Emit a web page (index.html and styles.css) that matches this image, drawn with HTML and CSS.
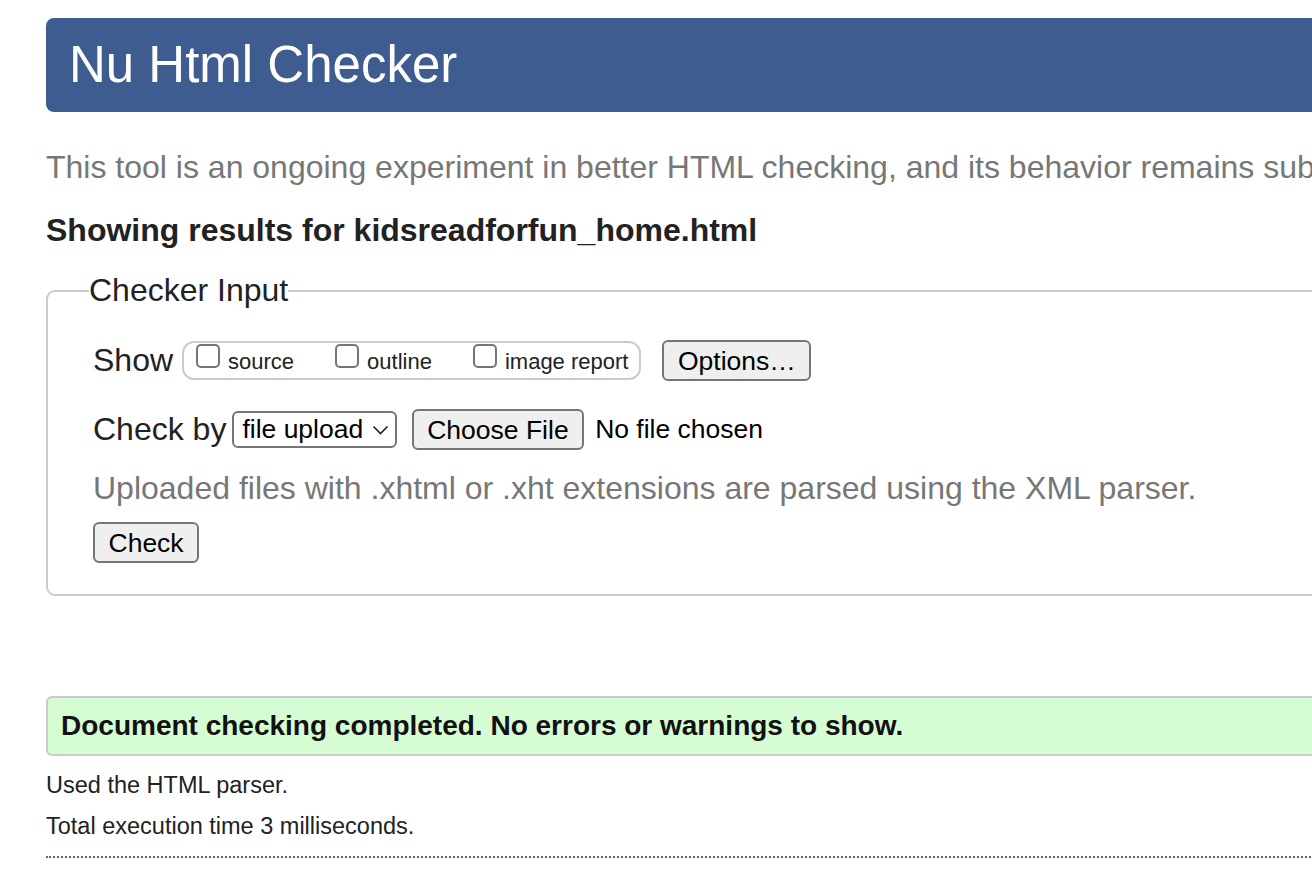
FILE: index.html
```html
<!DOCTYPE html>
<html lang="en">
<head>
<meta charset="utf-8">
<title>Nu Html Checker</title>
<link rel="stylesheet" href="styles.css">
</head>
<body>
<div class="page">
  <header class="banner"><h1>Nu Html Checker</h1></header>
  <p class="intro">This tool is an ongoing experiment in better HTML checking, and its behavior remains subject to change</p>
  <h2 class="result-title">Showing results for kidsreadforfun_home.html</h2>
  <fieldset class="checker">
    <legend>Checker Input</legend>
    <div class="row row-show">
      <span class="row-label">Show</span>
      <span class="group">
        <label class="opt"><input type="checkbox" class="cb"><span class="opt-text">source</span></label>
        <label class="opt"><input type="checkbox" class="cb"><span class="opt-text">outline</span></label>
        <label class="opt"><input type="checkbox" class="cb"><span class="opt-text">image report</span></label>
      </span>
      <button class="btn btn-options" type="button">Options…</button>
    </div>
    <div class="row row-checkby">
      <span class="row-label">Check by</span>
      <span class="select">
        <span class="select-text">file upload</span>
        <svg class="chev" width="17" height="10" viewBox="0 0 17 10"><path d="M1.5 1.5 L8.5 8.5 L15.5 1.5" fill="none" stroke="#222" stroke-width="1.6"/></svg>
      </span>
      <button class="btn btn-file" type="button">Choose File</button>
      <span class="file-status">No file chosen</span>
    </div>
    <p class="note">Uploaded files with .xhtml or .xht extensions are parsed using the XML parser.</p>
    <button class="btn btn-check" type="button">Check</button>
  </fieldset>
  <p class="success">Document checking completed. No errors or warnings to show.</p>
  <p class="meta meta-first">Used the HTML parser.</p>
  <p class="meta">Total execution time 3 milliseconds.</p>
  <div class="dotted"></div>
</div>
</body>
</html>
```
FILE: styles.css
```css
html {
  overflow: hidden;
}
body {
  margin: 0;
  font-family: "Liberation Sans", Arial, Helvetica, sans-serif;
  font-size: 32px;
  color: #222;
  background: #fff;
}
.page {
  width: 1700px;
  padding: 18px 0 0 46px;
}
.banner {
  height: 94px;
  box-sizing: border-box;
  padding: 16px 0 0 23px;
  background: #3e5c90;
  border-radius: 8px;
}
.banner h1 {
  margin: 0;
  font-size: 51px;
  font-weight: normal;
  line-height: 62px;
  color: #fff;
}
.intro {
  margin: 37px 0 0;
  line-height: 37px;
  color: #777;
  white-space: nowrap;
}
.result-title {
  margin: 26px 0 0;
  font-size: 32px;
  line-height: 37px;
  font-weight: bold;
  color: #222;
}
.checker {
  margin: 23px 0 0;
  padding: 0 0 31px 41px;
  border: 2px solid #cbcbcb;
  border-radius: 9px;
  min-width: 0;
}
.checker legend {
  padding: 0;
  font-size: 32px;
  line-height: 37px;
}
.row {
  display: flex;
  align-items: center;
  height: 41px;
  margin-left: 4px;
}
.row-show {
  margin-top: 31px;
}
.row-checkby {
  margin-top: 28px;
}
.row-label {
  font-size: 32px;
  line-height: 37px;
}
.group {
  display: flex;
  align-items: flex-start;
  gap: 41px;
  height: 39px;
  box-sizing: border-box;
  margin-left: 9px;
  padding: 0 11px 0 12px;
  border: 2px solid #cbcbcb;
  border-radius: 12px;
}
.opt {
  display: flex;
  align-items: flex-start;
}
.cb {
  appearance: none;
  -webkit-appearance: none;
  width: 24px;
  height: 24px;
  box-sizing: border-box;
  margin: 1px 8px 0 0;
  border: 2px solid #757575;
  border-radius: 5px;
  background: #fff;
}
.opt-text {
  margin-top: 6px;
  font-size: 22px;
  line-height: 25px;
  color: #222;
}
.btn {
  font-family: "Liberation Sans", Arial, Helvetica, sans-serif;
  font-size: 26.5px;
  line-height: 31px;
  color: #000;
  background: #efefef;
  border: 2px solid #767676;
  border-radius: 6px;
  padding: 3.5px 13.5px;
  margin: 0;
  box-sizing: border-box;
  height: 41px;
}
.btn-options {
  margin-left: 21px;
}
.select {
  display: flex;
  align-items: center;
  height: 37px;
  box-sizing: border-box;
  margin-left: 6px;
  padding: 0 6px 0 8px;
  border: 2px solid #767676;
  border-radius: 6px;
  font-size: 26.5px;
  color: #000;
  background: #fff;
}
.chev {
  margin-left: 8.5px;
}
.btn-file {
  margin-left: 15px;
}
.file-status {
  margin-left: 11px;
  font-size: 26.5px;
  color: #000;
}
.note {
  margin: 20px 0 0 4px;
  line-height: 37px;
  color: #777;
}
.btn-check {
  display: block;
  margin: 15px 0 0 4px;
}
.success {
  margin: 100px 0 0;
  padding: 12px 0 12px 13px;
  font-size: 28px;
  line-height: 32px;
  font-weight: bold;
  color: #111;
  background: #d5fcd3;
  border: 2px solid #cbcbcb;
  border-radius: 6px;
}
.meta {
  margin: 14px 0 0;
  font-size: 23.5px;
  line-height: 27px;
  color: #222;
}
.meta-first {
  margin-top: 16px;
}
.dotted {
  margin-top: 16px;
  border-top: 2px dotted #666;
}
```
